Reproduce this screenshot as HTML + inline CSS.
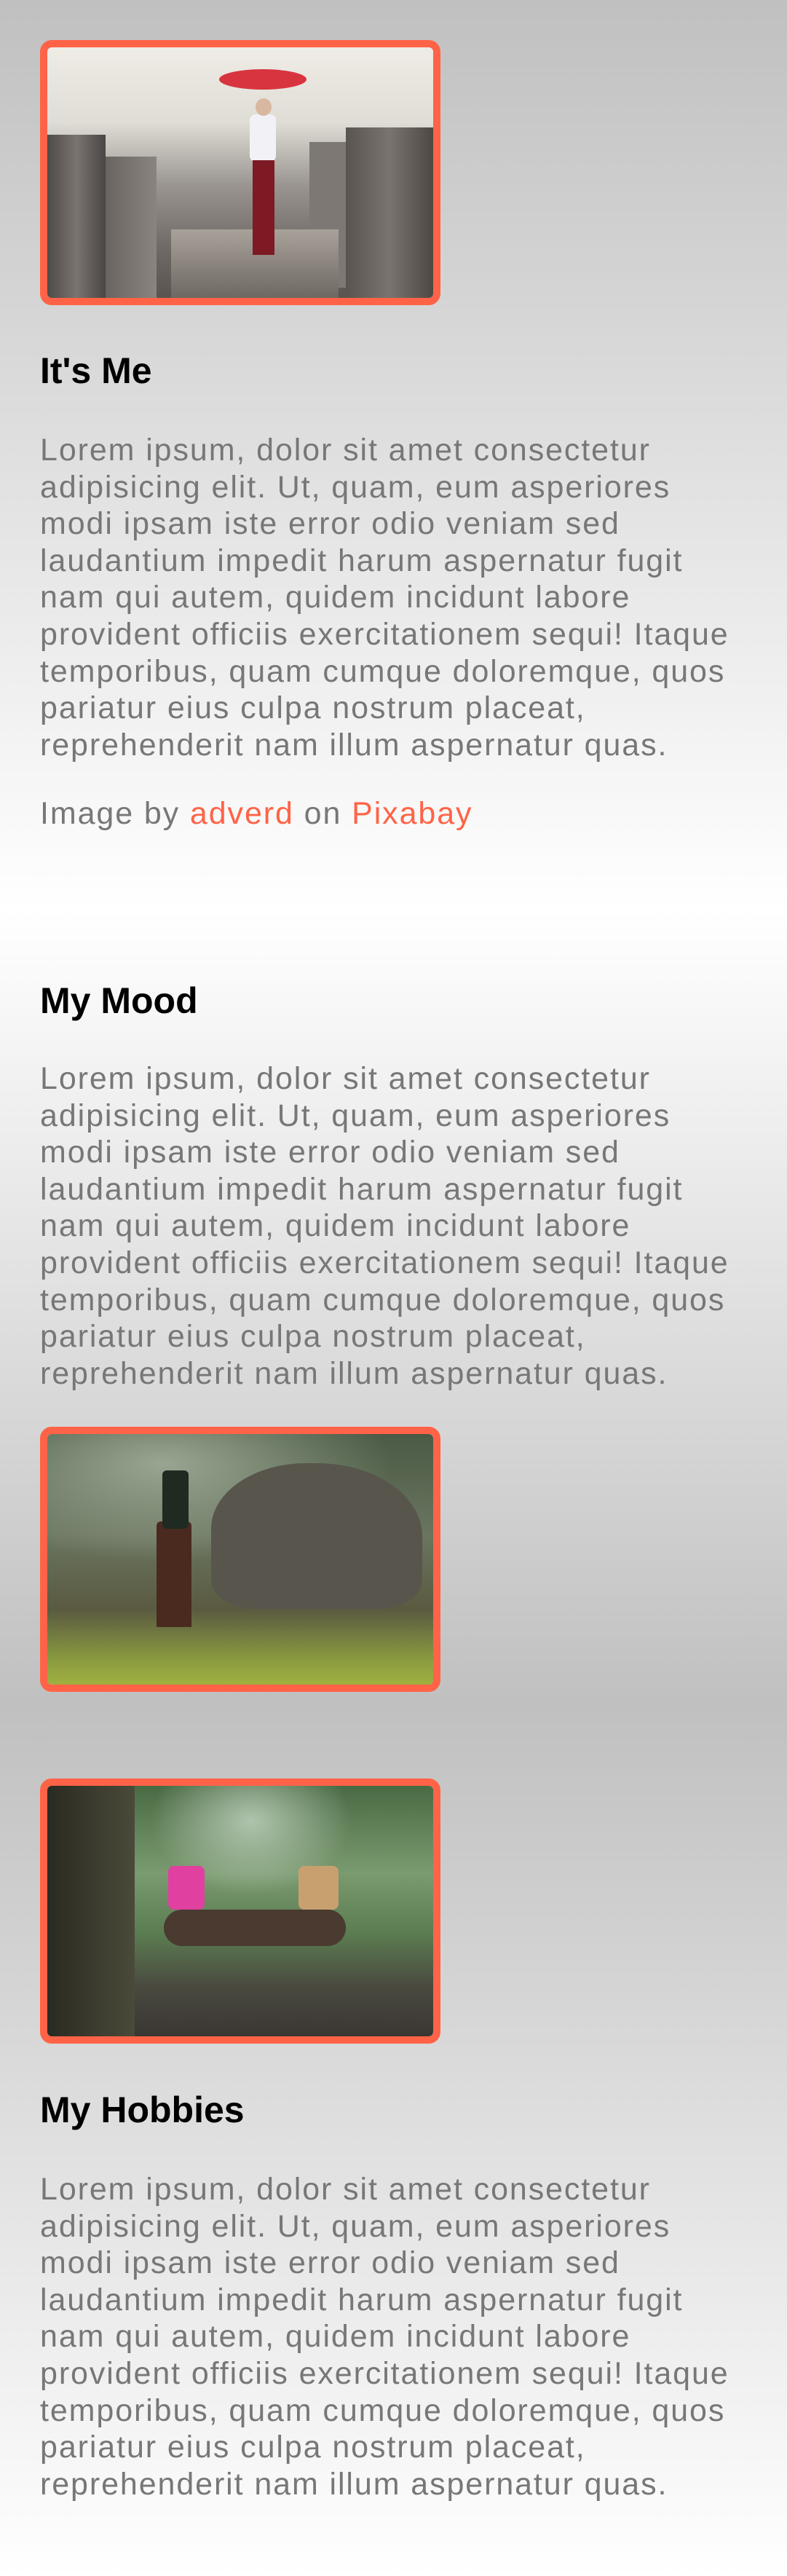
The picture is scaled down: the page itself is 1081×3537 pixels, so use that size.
<!DOCTYPE html>
<html><head><meta charset="utf-8"><style>
html,body{margin:0;padding:0}
body{width:1081px;height:3537px;position:relative;overflow:hidden;font-family:"Liberation Sans",sans-serif;
background:linear-gradient(#c0c0c0 0px,#ffffff 1250px,#c0c0c0 2340px,#ffffff 3537px);}
.img{position:absolute;left:55px;width:530px;height:344px;border:10px solid #ff6347;border-radius:16px;overflow:hidden}
.img .in{position:absolute;inset:0;border-radius:6px;overflow:hidden}
h2{position:absolute;left:55px;margin:0;font-size:50px;font-weight:bold;color:#000;line-height:60px}
p{position:absolute;left:55px;margin:0;font-size:43px;line-height:50.6px;color:#777;white-space:nowrap;letter-spacing:1.9px}
a{color:#ff6347;text-decoration:none}
.d{position:absolute}
</style></head><body>

<div class="img" style="top:55px">
 <div class="in" style="background:linear-gradient(#efece6 0%,#e0ddd6 30%,#9a9590 55%,#6f6a66 80%,#5a5450 100%)">
  <div class="d" style="left:0;top:120px;width:80px;height:224px;background:linear-gradient(90deg,#4e4a48,#7a7470,#4a4644)"></div>
  <div class="d" style="left:80px;top:150px;width:70px;height:194px;background:linear-gradient(90deg,#6a6460,#8a8480)"></div>
  <div class="d" style="left:410px;top:110px;width:120px;height:234px;background:linear-gradient(90deg,#5a5450,#7a7470,#4e4844)"></div>
  <div class="d" style="left:360px;top:130px;width:50px;height:200px;background:#7e7874"></div>
  <div class="d" style="left:170px;top:250px;width:230px;height:94px;background:linear-gradient(#a8a29a,#6e6862)"></div>
  <div class="d" style="left:236px;top:30px;width:120px;height:28px;border-radius:50%;background:#d8343f"></div>
  <div class="d" style="left:278px;top:92px;width:36px;height:65px;background:#f2f2f6;border-radius:8px"></div>
  <div class="d" style="left:282px;top:155px;width:30px;height:130px;background:#7d1a24"></div>
  <div class="d" style="left:286px;top:70px;width:22px;height:24px;border-radius:50%;background:#d8b8a0"></div>
 </div>
</div>

<h2 style="top:479px">It's Me</h2>
<p style="top:593px">Lorem ipsum, dolor sit amet consectetur<br>adipisicing elit. Ut, quam, eum asperiores<br>modi ipsam iste error odio veniam sed<br>laudantium impedit harum aspernatur fugit<br>nam qui autem, quidem incidunt labore<br>provident officiis exercitationem sequi! Itaque<br>temporibus, quam cumque doloremque, quos<br>pariatur eius culpa nostrum placeat,<br>reprehenderit nam illum aspernatur quas.</p>
<p style="top:1092px">Image by <a>adverd</a> on <a>Pixabay</a></p>

<h2 style="top:1344px">My Mood</h2>
<p style="top:1456px">Lorem ipsum, dolor sit amet consectetur<br>adipisicing elit. Ut, quam, eum asperiores<br>modi ipsam iste error odio veniam sed<br>laudantium impedit harum aspernatur fugit<br>nam qui autem, quidem incidunt labore<br>provident officiis exercitationem sequi! Itaque<br>temporibus, quam cumque doloremque, quos<br>pariatur eius culpa nostrum placeat,<br>reprehenderit nam illum aspernatur quas.</p>

<div class="img" style="top:1959px">
 <div class="in" style="background:linear-gradient(#4a5a44 0%,#6a7560 40%,#5a5a40 70%,#8a9a40 90%,#a0b040 100%)">
  <div class="d" style="left:0;top:0;width:530px;height:200px;background:radial-gradient(ellipse at 30% 20%,rgba(200,210,190,.6),rgba(0,0,0,0) 60%)"></div>
  <div class="d" style="left:225px;top:40px;width:290px;height:200px;border-radius:45% 50% 20% 20%;background:#58564c"></div>
  <div class="d" style="left:150px;top:120px;width:48px;height:145px;background:#4a2a1e;border-radius:6px 6px 0 0"></div>
  <div class="d" style="left:158px;top:50px;width:36px;height:80px;background:#1e2a22;border-radius:6px"></div>
 </div>
</div>

<div class="img" style="top:2442px">
 <div class="in" style="background:linear-gradient(#4a6a44 0%,#7a9a70 35%,#5a7a50 60%,#4a4a40 80%,#3a3632 100%)">
  <div class="d" style="left:130px;top:0;width:300px;height:160px;background:radial-gradient(ellipse at 50% 30%,rgba(210,225,210,.7),rgba(0,0,0,0) 65%)"></div>
  <div class="d" style="left:0;top:0;width:120px;height:344px;background:linear-gradient(90deg,#2a2a22,#4a4a3a)"></div>
  <div class="d" style="left:166px;top:110px;width:50px;height:60px;background:#e040a0;border-radius:8px"></div>
  <div class="d" style="left:345px;top:110px;width:55px;height:60px;background:#c8a070;border-radius:8px"></div>
  <div class="d" style="left:160px;top:170px;width:250px;height:50px;background:#4a3a30;border-radius:30px"></div>
 </div>
</div>

<h2 style="top:2867px">My Hobbies</h2>
<p style="top:2981px">Lorem ipsum, dolor sit amet consectetur<br>adipisicing elit. Ut, quam, eum asperiores<br>modi ipsam iste error odio veniam sed<br>laudantium impedit harum aspernatur fugit<br>nam qui autem, quidem incidunt labore<br>provident officiis exercitationem sequi! Itaque<br>temporibus, quam cumque doloremque, quos<br>pariatur eius culpa nostrum placeat,<br>reprehenderit nam illum aspernatur quas.</p>

</body></html>
